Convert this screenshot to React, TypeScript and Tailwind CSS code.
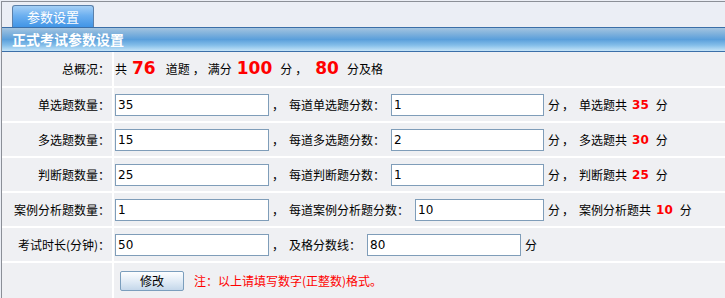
import React from 'react';

// 正式考试参数设置 panel

function Field({ value, width }: { value: string; width: string }) {
  return (
    <input
      defaultValue={value}
      className={`${width} h-[22px] shrink-0 border border-[#7f9db9] bg-white px-[2px] font-['DejaVu_Sans',sans-serif] text-[12px] text-black outline-none`}
    />
  );
}

function Red({ children, big }: { children: React.ReactNode; big?: boolean }) {
  if (big) {
    return (
      <span className="font-['DejaVu_Sans',sans-serif] text-[17px] font-bold leading-none text-[#ff0000]">
        {children}
      </span>
    );
  }
  return (
    <span className="font-['DejaVu_Sans',sans-serif] text-[12px] font-bold text-[#ff0000]">{children}</span>
  );
}

function Row({ label, tall, children }: { label: string; tall?: boolean; children: React.ReactNode }) {
  return (
    <>
      <div
        className={`flex items-center justify-end bg-[#eff0f3] pr-[2px] ${tall ? 'h-[34px]' : 'h-[33px]'}`}
      >
        {label}
      </div>
      <div className={`flex items-center bg-[#eff0f3] pl-[1px] ${tall ? 'h-[34px]' : 'h-[33px]'}`}>
        {children}
      </div>
    </>
  );
}

const rows = [
  { label: '单选题数量：', count: '35', each: '每道单选题分数：', score: '1', name: '单选题共', total: '35', w2: 'w-[153px]' },
  { label: '多选题数量：', count: '15', each: '每道多选题分数：', score: '2', name: '多选题共', total: '30', w2: 'w-[153px]' },
  { label: '判断题数量：', count: '25', each: '每道判断题分数：', score: '1', name: '判断题共', total: '25', w2: 'w-[153px]' },
  { label: '案例分析题数量：', count: '1', each: '每道案例分析题分数：', score: '10', name: '案例分析题共', total: '10', w2: 'w-[129px]' },
];

export default function App() {
  return (
    <div className="min-h-[298px] bg-[#ebeef5] pl-[1px] pt-[1px] font-['Noto_Sans_CJK_SC',sans-serif] text-[12px] text-black">
      <div className="min-h-[297px] border-l border-t border-[#8b8f97]">
        {/* tab strip */}
        <div className="flex h-[25px] items-end pl-[10px]">
          <div className="flex h-[22px] w-[82px] items-center justify-center rounded-t-[3px] border border-b-0 border-[#5b80aa] bg-[linear-gradient(to_bottom,#a6d0f6,#6db0f0_45%,#4195e6)] text-[13px] text-white">
            参数设置
          </div>
        </div>

        {/* section title */}
        <div className="flex h-[25px] items-center border-y border-[#3b6fa8] bg-[linear-gradient(to_bottom,#a3c4e0,#7fb1dc_25%,#5a9fdb_50%,#84bee9_75%,#c4e4f8)] pl-[10px] text-[14px] font-bold text-white">
          正式考试参数设置
        </div>

        <div className="grid grid-cols-[110px_1fr] gap-[2px] bg-white">
          <Row label="总概况：" tall>
            <div className="flex items-baseline">
              <span>共</span>
              <span className="ml-[5px]"><Red big>76</Red></span>
              <span className="ml-[10px]">道题</span>
              <span className="ml-[3px]">，</span>
              <span className="ml-[3px]">满分</span>
              <span className="ml-[5px]"><Red big>100</Red></span>
              <span className="ml-[8px]">分</span>
              <span className="ml-[3px]">，</span>
              <span className="ml-[8px]"><Red big>80</Red></span>
              <span className="ml-[8px]">分及格</span>
            </div>
          </Row>

          {rows.map((r) => (
            <Row key={r.label} label={r.label}>
              <Field value={r.count} width="w-[154px]" />
              <span className="ml-[3px]">，</span>
              <span className="ml-[5px]">{r.each}</span>
              <span className="ml-[6px] flex"><Field value={r.score} width={r.w2} /></span>
              <span className="ml-[4px]">分</span>
              <span className="ml-[2px]">，</span>
              <span className="ml-[5px]">{r.name}</span>
              <span className="ml-[5px]"><Red>{r.total}</Red></span>
              <span className="ml-[7px]">分</span>
            </Row>
          ))}

          <Row label="考试时长(分钟)：">
            <Field value="50" width="w-[154px]" />
            <span className="ml-[3px]">，</span>
            <span className="ml-[5px]">及格分数线：</span>
            <span className="ml-[6px] flex"><Field value="80" width="w-[154px]" /></span>
            <span className="ml-[4px]">分</span>
          </Row>

          <div className="h-[36px] bg-[#eff0f3]" />
          <div className="flex h-[36px] items-center bg-[#eff0f3] pl-[6px]">
            <button className="h-[20px] w-[64px] rounded-[2px] border border-[#7b9ebd] bg-[linear-gradient(to_bottom,#fdfeff,#dce8f4_60%,#c4d7ea)] text-[12px] text-black">
              修改
            </button>
            <span className="ml-[10px] text-[#ff0000]">注：以上请填写数字(正整数)格式。</span>
          </div>
        </div>
      </div>
    </div>
  );
}
